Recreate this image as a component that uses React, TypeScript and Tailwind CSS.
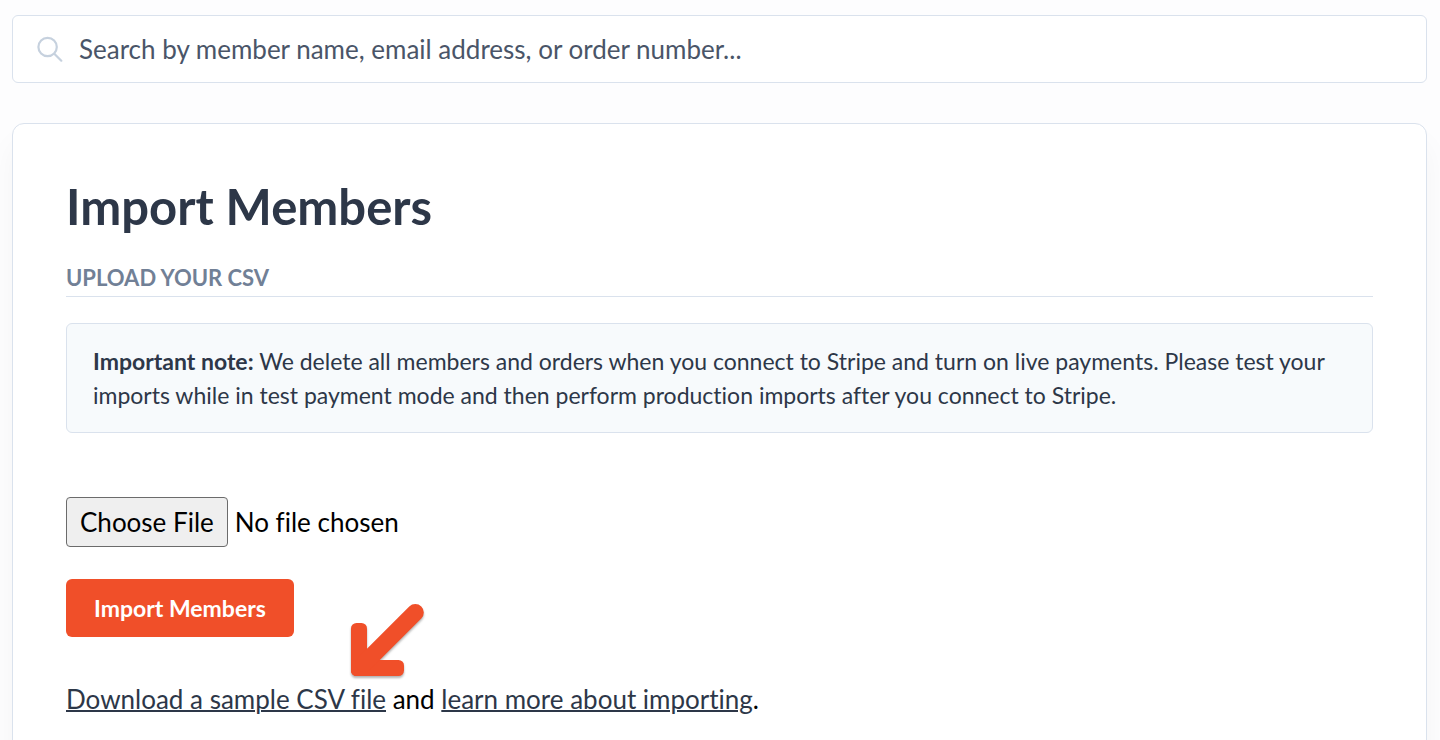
import { useRef, useState } from "react";

const SearchBar = () => (
  <label className="flex h-17 items-center gap-4 rounded-md border border-[#dae2ed] bg-white px-6">
    <svg viewBox="0 0 26 26" className="size-6.5 shrink-0" fill="none" stroke="#c6d1de" strokeWidth="2.2" strokeLinecap="round">
      <circle cx="10.6" cy="11" r="9.2" />
      <path d="M17.3 17.7l7 7" />
    </svg>
    <input
      type="text"
      aria-label="Search members"
      placeholder="Search by member name, email address, or order number..."
      className="min-w-0 flex-1 text-[26px] text-[#4a5568] outline-none placeholder:text-[#4a5568]"
    />
  </label>
);

const ArrowPointer = () => (
  <svg
    viewBox="0 0 80 80"
    className="pointer-events-none absolute -top-[79px] left-[282px] size-20 drop-shadow-[0_2px_1px_rgba(0,0,0,0.3)]"
    fill="#f04f29"
  >
    <rect x="3" y="23" width="16" height="53" rx="5.5" />
    <rect x="3" y="60" width="53" height="16" rx="5.5" />
    <path d="M67.3 12.5L16 63.8" stroke="#f04f29" strokeWidth="17" strokeLinecap="round" />
  </svg>
);

const FilePicker = () => {
  const inputRef = useRef<HTMLInputElement>(null);
  const [fileName, setFileName] = useState("No file chosen");

  return (
    <div className="mt-16 flex items-center gap-[7px] text-[26px] text-black">
      <button
        type="button"
        onClick={() => inputRef.current?.click()}
        className="h-12.5 rounded-sm border border-[#6b6b6b] bg-[#efefef] px-[13px]"
      >
        Choose File
      </button>
      <span>{fileName}</span>
      <input
        ref={inputRef}
        type="file"
        accept=".csv"
        aria-label="Members CSV"
        className="hidden"
        onChange={(e) => setFileName(e.target.files?.[0]?.name ?? "No file chosen")}
      />
    </div>
  );
};

const App = () => (
  <div className="min-h-screen bg-[#fdfdfe] pt-[15px] pr-[13px] pl-3 font-['Lato',sans-serif] [font-variant-ligatures:none]">
    <SearchBar />

    <main className="mt-10 rounded-xl border border-[#dae2ed] bg-white px-[53px] pt-[50px] pb-13 shadow-[0_20px_30px_rgba(0,0,0,0.04)]">
      <h1 className="text-[49px] leading-16 font-bold text-[#2d3748]">Import Members</h1>
      <h2 className="mt-6.5 border-b border-[#dae2ed] pb-1 text-[22px] leading-7 font-bold text-[#718096] uppercase">
        Upload your CSV
      </h2>

      <p className="mt-6.5 rounded-md border border-[#dae2ed] bg-[#f7fafc] px-[26px] py-5 text-[23px] leading-[34px] text-[#2d3748]">
        <strong>Important note:</strong> We delete all members and orders when you connect to Stripe and turn on live
        payments. Please test your imports while in test payment mode and then perform production imports after you
        connect to Stripe.
      </p>

      <FilePicker />

      <button type="button" className="mt-8 h-14.5 rounded-md bg-[#f04f29] px-7 text-[23px] font-bold text-white">
        Import Members
      </button>

      <p className="relative mt-10.5 text-[26px] leading-10 text-black">
        <a href="#sample" className="text-[#2d3748] underline decoration-2">Download a sample CSV file</a> and{" "}
        <a href="#learn" className="text-[#2d3748] underline decoration-2">learn more about importing</a>.
        <ArrowPointer />
      </p>
    </main>
  </div>
);

export default App;
